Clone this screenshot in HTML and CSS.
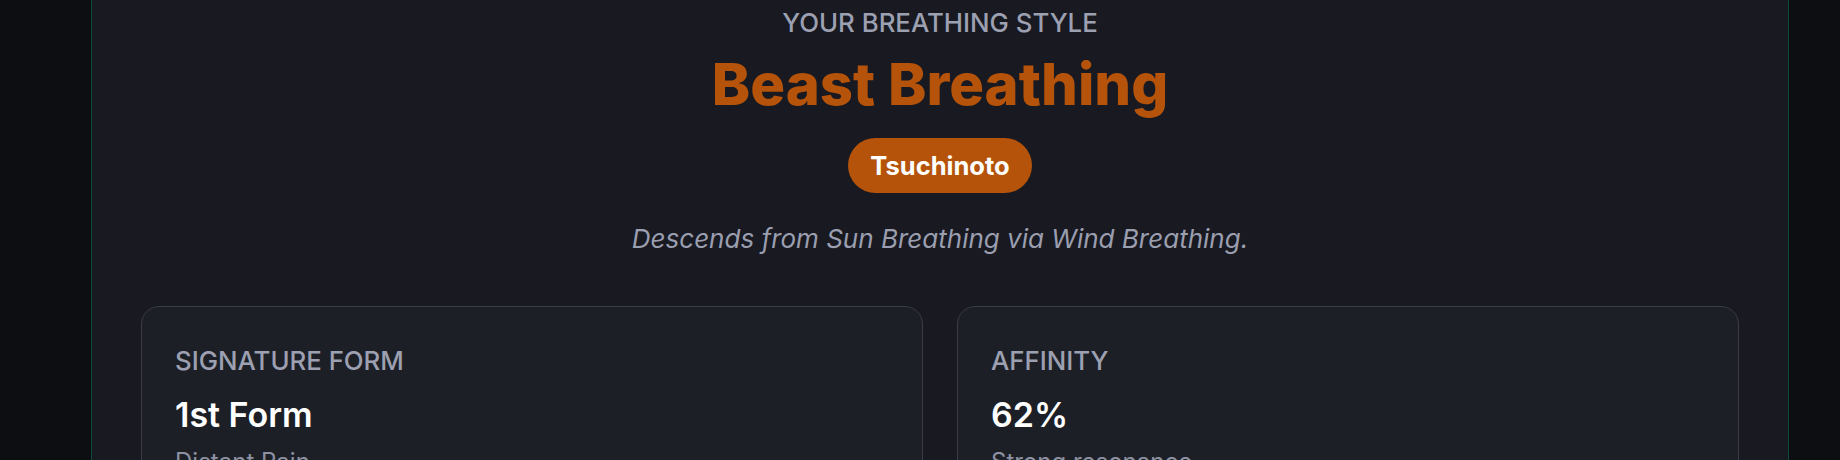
FILE: index.html
```html
<!DOCTYPE html>
<html lang="en">
<head>
<meta charset="utf-8">
<title>Your Breathing Style</title>
<link rel="stylesheet" href="styles.css">
</head>
<body>
<main class="panel">
  <section class="hero">
    <p class="eyebrow">YOUR BREATHING STYLE</p>
    <h1 class="title">Beast Breathing</h1>
    <span class="badge">Tsuchinoto</span>
    <p class="lineage">Descends from Sun Breathing via Wind Breathing.</p>
  </section>
  <section class="cards">
    <article class="card">
      <p class="card-label">SIGNATURE FORM</p>
      <p class="card-value">1st Form</p>
      <p class="card-sub">Distant Rain</p>
    </article>
    <article class="card">
      <p class="card-label">AFFINITY</p>
      <p class="card-value">62%</p>
      <p class="card-sub">Strong resonance</p>
    </article>
  </section>
</main>
</body>
</html>
```

FILE: styles.css
```css
html, body {
  margin: 0;
  padding: 0;
}
body {
  background: #0d0e12;
  font-family: Inter, "Noto Sans", sans-serif;
  height: 460px;
  overflow: hidden;
}
.panel {
  margin: 0 51px 0 91px;
  background: #181921;
  border-left: 1px solid #0d4a37;
  border-right: 1px solid #0d4a37;
  padding: 0 49px 40px;
  min-height: 460px;
  box-sizing: border-box;
}
.hero {
  display: flex;
  flex-direction: column;
  align-items: center;
  text-align: center;
  padding-top: 7px;
}
.eyebrow {
  margin: 0;
  font-size: 25.8px;
  line-height: 32px;
  font-weight: 500;
  color: #9ca0b1;
}
.title {
  margin: 13px 0 0;
  font-size: 58px;
  line-height: 64px;
  font-weight: 800;
  color: #b45309;
  letter-spacing: 0;
}
.badge {
  margin-top: 22px;
  height: 55px;
  padding: 0 22px;
  display: inline-flex;
  align-items: center;
  border-radius: 999px;
  background: #b45309;
  color: #ffffff;
  font-size: 25.5px;
  font-weight: 700;
}
.lineage {
  margin: 30px 0 0;
  font-size: 26px;
  line-height: 32px;
  font-style: italic;
  color: #9a9eaf;
}
.cards {
  margin-top: 51px;
  display: grid;
  grid-template-columns: 1fr 1fr;
  gap: 34px;
}
.card {
  background: #1d1f27;
  border: 1px solid #3a3c46;
  border-radius: 18px;
  padding: 39px 33px 30px;
}
.card-label {
  margin: 0;
  font-size: 25.8px;
  line-height: 30px;
  font-weight: 500;
  color: #9ca0b1;
}
.card-value {
  margin: 19px 0 0;
  font-size: 34px;
  line-height: 40px;
  font-weight: 600;
  color: #ffffff;
}
.card-sub {
  margin: 12px 0 0;
  font-size: 24px;
  line-height: 30px;
  color: #8d91a2;
}
```
